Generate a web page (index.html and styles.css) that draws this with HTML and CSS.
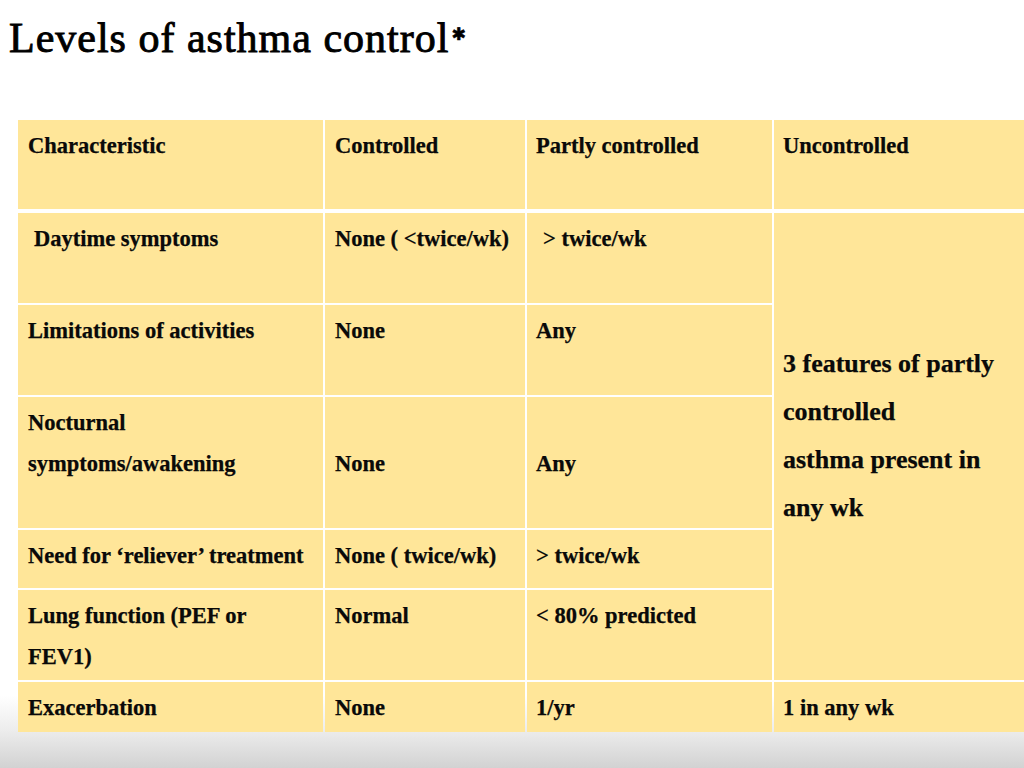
FILE: index.html
```html
<!DOCTYPE html>
<html lang="en">
<head>
<meta charset="utf-8">
<title>Levels of asthma control</title>
<link rel="stylesheet" href="styles.css">
</head>
<body>
<main class="slide">
  <h1 class="title">Levels of asthma control<sup class="star">✱</sup></h1>

  <div class="grid head">
    <div class="cell">Characteristic</div>
    <div class="cell">Controlled</div>
    <div class="cell tight">Partly controlled</div>
    <div class="cell tight">Uncontrolled</div>
  </div>

  <div class="grid body">
    <div class="cell r1 c1 indent">Daytime symptoms</div>
    <div class="cell r1 c2">None ( &lt;twice/wk)</div>
    <div class="cell r1 c3 indent">&gt; twice/wk</div>
    <div class="cell merged tight">3 features of partly<br>controlled<br>asthma present in<br>any wk</div>

    <div class="cell r2 c1">Limitations of activities</div>
    <div class="cell r2 c2">None</div>
    <div class="cell r2 c3 tight">Any</div>

    <div class="cell r3 c1">Nocturnal<br>symptoms/awakening</div>
    <div class="cell r3 c2 low">None</div>
    <div class="cell r3 c3 low tight">Any</div>

    <div class="cell r4 c1">Need for ‘reliever’ treatment</div>
    <div class="cell r4 c2">None ( twice/wk)</div>
    <div class="cell r4 c3 tight">&gt; twice/wk</div>

    <div class="cell r5 c1">Lung function (PEF or<br>FEV1)</div>
    <div class="cell r5 c2">Normal</div>
    <div class="cell r5 c3 tight">&lt; 80% predicted</div>

    <div class="cell r6 c1">Exacerbation</div>
    <div class="cell r6 c2">None</div>
    <div class="cell r6 c3 tight">1/yr</div>
    <div class="cell r6 c4 tight">1 in any wk</div>
  </div>
</main>
</body>
</html>
```

FILE: styles.css
```css
html, body {
  margin: 0;
  padding: 0;
}

body {
  width: 1024px;
  height: 768px;
  overflow: hidden;
  background: linear-gradient(to bottom, #ffffff 0, #ffffff 695px, #eeeeee 728px, #d2d2d2 768px);
  color: #0a0a0a;
}

.slide {
  padding-top: 14px;
}

.title {
  margin: 0 0 58px 0;
  padding-left: 9px;
  font-family: "Liberation Serif", "Times New Roman", serif;
  font-weight: normal;
  font-size: 42px;
  line-height: 48px;
  letter-spacing: 1px;
  color: #000;
  white-space: nowrap;
  -webkit-text-stroke: 0.9px #000;
}

.star {
  font-family: "DejaVu Sans", sans-serif;
  font-size: 17px;
  line-height: 0;
  position: relative;
  top: 3px;
  margin-left: 2px;
  vertical-align: super;
  letter-spacing: 0;
  -webkit-text-stroke: 0.6px #000;
}

.grid {
  display: grid;
  grid-template-columns: 305px 200px 245px 250px;
  column-gap: 2px;
  row-gap: 2px;
  margin-left: 18px;
  width: 1006px;
  font-family: "Liberation Serif", "Times New Roman", serif;
  font-weight: bold;
  font-size: 22.5px;
  line-height: 41px;
  -webkit-text-stroke: 0.25px #000;
}

.head {
  grid-template-rows: 89px;
  margin-bottom: 4px;
}

.body {
  grid-template-rows: 90px 90px 131px 58px 90px 50px;
}

.cell {
  background: #ffe699;
  padding: 5px 8px 0 10px;
  box-sizing: border-box;
  white-space: nowrap;
}

.tight {
  padding-left: 9px;
}

.indent {
  padding-left: 16px;
}

.low {
  padding-top: 46px;
}

.c1 { grid-column: 1; }
.c2 { grid-column: 2; }
.c3 { grid-column: 3; }
.c4 { grid-column: 4; }

.r1 { grid-row: 1; }
.r2 { grid-row: 2; }
.r3 { grid-row: 3; }
.r4 { grid-row: 4; }
.r5 { grid-row: 5; }
.r6 { grid-row: 6; }

.merged {
  grid-column: 4;
  grid-row: 1 / span 5;
  font-size: 26px;
  line-height: 48px;
  padding-top: 127px;
}
```
